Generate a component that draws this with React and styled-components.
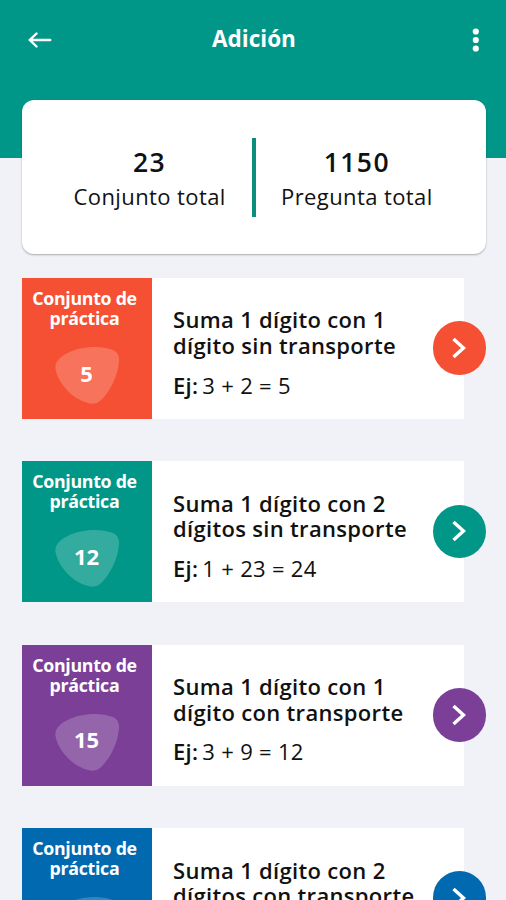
import React from 'react';
import styled, { createGlobalStyle } from 'styled-components';

const GlobalStyle = createGlobalStyle`
  * {
    box-sizing: border-box;
  }

  body {
    margin: 0;
    background: #f0f2f7;
    font-family: 'Open Sans', 'Noto Sans', sans-serif;
    color: #111;
  }
`;

const Screen = styled.div`
  height: 900px;
  overflow: hidden;
  background: #f0f2f7;
`;

const Header = styled.header`
  display: flex;
  align-items: flex-start;
  justify-content: space-between;
  height: 157.5px;
  padding: 22px 20px 0 22px;
  background: #009788;
`;

const IconButton = styled.button`
  display: flex;
  align-items: center;
  justify-content: center;
  width: 36px;
  height: 36px;
  padding: 0;
  border: none;
  background: none;
  color: white;
`;

const MenuButton = styled(IconButton)`
  width: 20px;
`;

const Title = styled.h1`
  flex: 1;
  margin: 0 0 0 -16px;
  text-align: center;
  font-size: 22.5px;
  font-weight: 700;
  line-height: 33px;
  letter-spacing: 0;
  color: white;
`;

const Summary = styled.section`
  display: grid;
  grid-template-columns: 1fr 4px 1fr;
  align-items: center;
  height: 154px;
  margin: -57.5px 20px 0 21.5px;
  padding: 0 26px;
  border-radius: 12px;
  background: white;
  box-shadow: 0 1px 2px rgba(0, 0, 0, 0.3);
`;

const Divider = styled.div`
  height: 79px;
  background: #0b8f7c;
`;

const Stat = styled.div`
  padding-top: 4px;
  text-align: center;
  white-space: nowrap;

  &:last-child {
    padding-right: 2px;
  }
`;

const StatValue = styled.div`
  font-size: 26.5px;
  font-weight: 600;
  line-height: 34px;
  letter-spacing: 1.4px;
`;

const StatLabel = styled.div`
  font-size: 22px;
  line-height: 34px;
  letter-spacing: 0.4px;
`;

const List = styled.main`
  display: flex;
  flex-direction: column;
  gap: 42.4px;
  padding: 24px 42px 0 22px;
`;

const Card = styled.article`
  display: flex;
  align-items: center;
  flex-shrink: 0;
  height: 141px;
  background: white;
`;

const Tile = styled.div`
  display: flex;
  flex-direction: column;
  align-items: center;
  align-self: stretch;
  flex-shrink: 0;
  width: 130px;
  padding: 10px 1px 0 0;
  background: ${props => props.color};
  color: white;
`;

const TileLabel = styled.div`
  padding-right: 4px;
  text-align: center;
  font-size: 17.8px;
  font-weight: 700;
  line-height: 20px;
  letter-spacing: -0.3px;
  white-space: pre-line;
`;

const Badge = styled.div`
  display: grid;
  place-items: center;
  width: 64px;
  height: 58px;
  margin-top: 18px;

  > * {
    grid-area: 1 / 1;
  }
`;

const BadgeCount = styled.span`
  padding-bottom: 5px;
  font-size: 22px;
  font-weight: 700;
  line-height: 28px;
`;

const Content = styled.div`
  flex: 1;
  padding: 10px 0 0 21px;
  white-space: nowrap;
`;

const CardTitle = styled.h2`
  margin: 0 0 11px;
  font-size: 22px;
  font-weight: 600;
  line-height: 25.6px;
  letter-spacing: 0.32px;
  white-space: pre-line;
`;

const Example = styled.p`
  margin: 0;
  font-size: 22px;
  line-height: 30px;
  letter-spacing: 0.3px;

  strong {
    margin-right: 4px;
    font-weight: 600;
  }
`;

const GoButton = styled.button`
  display: flex;
  align-items: center;
  justify-content: center;
  flex-shrink: 0;
  width: 53.5px;
  height: 53.5px;
  margin: 0 -22px 1px -30px;
  padding: 0;
  border: none;
  border-radius: 50%;
  background: ${props => props.color};
  color: white;
`;

const practiceSets = [
  { count: 5, color: '#f55033', title: 'Suma 1 dígito con 1\ndígito sin transporte', example: '3 + 2 = 5' },
  { count: 12, color: '#009788', title: 'Suma 1 dígito con 2\ndígitos sin transporte', example: '1 + 23 = 24' },
  { count: 15, color: '#7b3f98', title: 'Suma 1 dígito con 1\ndígito con transporte', example: '3 + 9 = 12' },
  { color: '#0069b0', title: 'Suma 1 dígito con 2\ndígitos con transporte' },
];

const BackIcon = () => (
  <svg width="24" height="16" viewBox="0 0 24 16" fill="none" stroke="currentColor" strokeWidth="2.4" strokeLinecap="round">
    <path d="M22.2 8H2M8.5 1.5L1.8 8l6.7 6.5" />
  </svg>
);

const MoreIcon = () => (
  <svg width="8" height="26" viewBox="0 0 8 26" fill="currentColor">
    <circle cx="3.8" cy="4.5" r="3.1" />
    <circle cx="3.8" cy="13" r="3.1" />
    <circle cx="3.8" cy="21.500" r="3.1" />
  </svg>
);

const ChevronIcon = () => (
  <svg width="14" height="22" viewBox="0 0 14 22" fill="none" stroke="currentColor" strokeWidth="3.400">
    <path d="M1.500 2L11.500 11L1.500 20" />
  </svg>
);

const BadgeShape = () => (
  <svg width="64" height="58" viewBox="0 0 64 58" fill="rgba(255, 255, 255, 0.2)">
    <path d="M1 17.500C7 4 38-3.500 58 4Q64.500 7 64 15C63 31 54 47 45 55Q41 59 33 57C17 53 3 37 0.500 23Q0 20 1 17.500Z" />
  </svg>
);

const PracticeCard = ({ set }) => (
  <Card>
    <Tile color={set.color}>
      <TileLabel>{'Conjunto de\npráctica'}</TileLabel>
      <Badge>
        <BadgeShape />
        {set.count && <BadgeCount>{set.count}</BadgeCount>}
      </Badge>
    </Tile>
    <Content>
      <CardTitle>{set.title}</CardTitle>
      <Example>
        {set.example ? (
          <>
            <strong>Ej:</strong>
            {set.example}
          </>
        ) : (
          <br />
        )}
      </Example>
    </Content>
    <GoButton color={set.color} aria-label="Abrir">
      <ChevronIcon />
    </GoButton>
  </Card>
);

const App = () => (
  <>
    <GlobalStyle />
    <Screen>
      <Header>
        <IconButton aria-label="Volver">
          <BackIcon />
        </IconButton>
        <Title>Adición</Title>
        <MenuButton aria-label="Más opciones">
          <MoreIcon />
        </MenuButton>
      </Header>
      <Summary>
        <Stat>
          <StatValue>23</StatValue>
          <StatLabel>Conjunto total</StatLabel>
        </Stat>
        <Divider />
        <Stat>
          <StatValue>1150</StatValue>
          <StatLabel>Pregunta total</StatLabel>
        </Stat>
      </Summary>
      <List>
        {practiceSets.map((set) => (
          <PracticeCard key={set.color} set={set} />
        ))}
      </List>
    </Screen>
  </>
);

export default App;
